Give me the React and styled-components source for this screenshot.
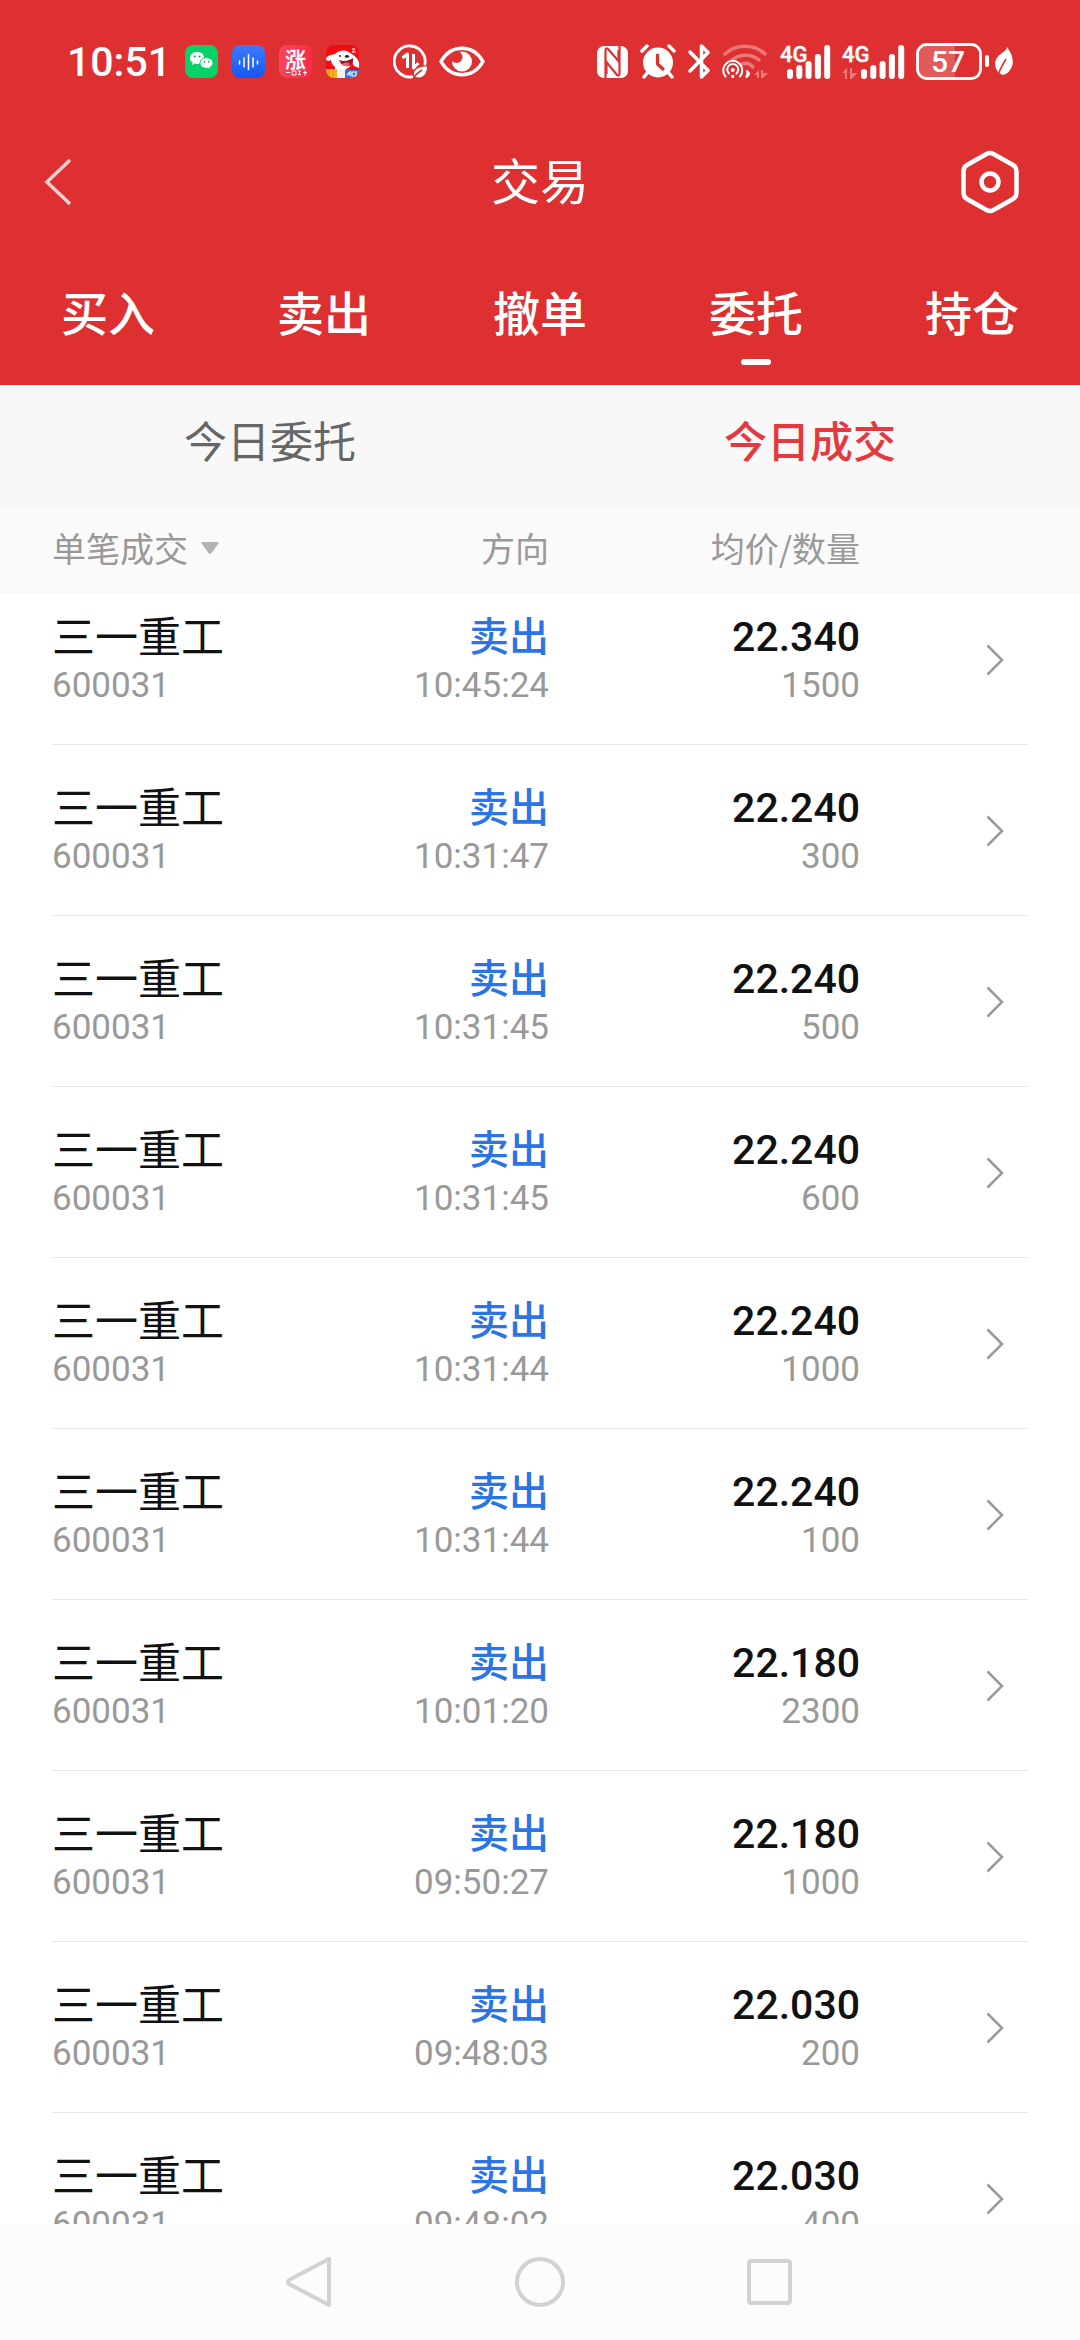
import React, { useState } from "react";
import styled, { createGlobalStyle } from "styled-components";

const GlobalStyle = createGlobalStyle`
    * {
        box-sizing: border-box;
    }
    body {
        margin: 0;
        background-color: #ffffff;
        font-family: "Noto Sans CJK SC", "Noto Sans", sans-serif;
    }
    button {
        margin: 0;
        padding: 0;
        border: none;
        background: none;
        color: inherit;
        font: inherit;
    }
    svg {
        display: block;
        flex: none;
    }
`

const digits = 'Roboto, "Noto Sans CJK SC", sans-serif'

const Screen = styled.div`
    height: 100vh;
    display: flex;
    flex-direction: column;
    overflow: hidden;
`

const Header = styled.header`
    background-color: #de3031;
    color: #ffffff;
`

const StatusBar = styled.div`
    height: 123px;
    padding: 0 67px;
    display: flex;
    align-items: center;
    justify-content: space-between;
`

const StatusGroup = styled.div`
    display: flex;
    align-items: center;
    gap: ${props => props.$gap}px;
`

const Clock = styled.span`
    font-family: ${digits};
    font-size: 41px;
    font-weight: 500;
    line-height: 50px;
`

const TitleBar = styled.div`
    height: 117px;
    padding: 0 42px;
    display: grid;
    grid-template-columns: 1fr auto 1fr;
    align-items: center;
`

const Title = styled.h1`
    margin: 0;
    padding-bottom: 6px;
    font-size: 49px;
    font-weight: 400;
    line-height: 60px;
`

const BackButton = styled.button`
    justify-self: start;
`

const SettingsButton = styled.button`
    justify-self: end;
    padding-right: 19px;
`

const Tabs = styled.nav`
    height: 145px;
    display: flex;
`

const Tab = styled.button`
    flex: 1;
    display: flex;
    flex-direction: column;
    align-items: center;
    justify-content: flex-end;
    gap: 18px;
    padding-bottom: 20px;
    font-size: 47px;
    font-weight: 500;
    line-height: 60px;

    &::after {
        content: "";
        width: 30px;
        height: 6px;
        border-radius: 3px;
        background-color: ${props => (props.$active ? "#ffffff" : "transparent")};
    }
`

const SubTabs = styled.div`
    height: 123px;
    display: flex;
    background-color: #f8f8f8;
`

const SubTab = styled.button`
    flex: 1;
    padding-bottom: 16px;
    font-size: 43px;
    font-weight: ${props => (props.$active ? 500 : 400)};
    color: ${props => (props.$active ? "#e4393f" : "#666666")};
`

const Main = styled.main`
    flex: 1;
    min-height: 0;
    overflow: hidden;
`

const Deals = styled.table`
    display: block;
    width: 100%;
`

const DealsHead = styled.thead`
    display: block;
    position: relative;
    z-index: 1;
    background-color: #fafafa;
`

// the list is scrolled a little under the head
const DealsBody = styled.tbody`
    display: block;
    margin-top: -20px;
`

const Row = styled.tr`
    margin: 0 52px;
    display: grid;
    grid-template-columns: 225fr 272fr 311fr 168fr;
`

const HeadRow = styled(Row)`
    height: 86px;
    padding-bottom: 6px;
    align-items: center;
`

const DealRow = styled(Row)`
    height: 171px;
    border-bottom: 1px solid #e9e9e9;
`

const HeadCell = styled.th`
    padding: 0;
    font-size: 34px;
    font-weight: 400;
    line-height: 50px;
    color: #999999;
    text-align: ${props => props.$align || "right"};
`

const SortButton = styled.button`
    display: flex;
    align-items: center;
    gap: 13px;
`

const Cell = styled.td`
    padding: 35px 0 0;
    text-align: ${props => props.$align || "right"};
`

const Lead = styled.div`
    height: 50px;
    line-height: 50px;
`

const StockName = styled(Lead)`
    font-size: 43px;
    color: #111111;
`

const Direction = styled(Lead)`
    font-size: 40px;
    font-weight: 500;
    color: #2b74e6;
`

const Price = styled(Lead)`
    line-height: 56px;
    font-family: ${digits};
    font-size: 41px;
    font-weight: 500;
    color: #111111;
`

const Sub = styled.div`
    line-height: 54px;
    font-family: ${digits};
    font-size: 35px;
    color: #999999;
`

const ArrowCell = styled.td`
    display: flex;
    justify-content: flex-end;
    align-items: center;
    padding: 2px 24px 0 0;
`

const NavBar = styled.footer`
    height: 116px;
    display: flex;
    align-items: center;
    justify-content: center;
    gap: 180px;
    background-color: #fcfcfc;
`

/* ---------- status bar icons ---------- */

const WechatIcon = () => (
    <svg width="33" height="33" viewBox="0 0 33 33">
        <rect width="33" height="33" rx="8" fill="#07d267" />
        <path d="M12 7c-4 0-7 2.600-7 6 0 2 1 3.500 2.600 4.600L7 20l2.800-1.400c4.600 1.200 9.400-1.600 9.400-5.600S16 7 12 7z" fill="#fff" />
        <path d="M21.500 12.700c-3.800 0-6.500 2.400-6.500 5.400s3.300 6 8 5l2.700 1.400-.6-2.300c1.900-1.100 2.900-2.500 2.900-4.100 0-3-2.900-5.400-6.500-5.400z" fill="#fff" stroke="#07d267" strokeWidth="1" />
        <circle cx="9.800" cy="11.500" r="1" fill="#07a552" />
        <circle cx="14.500" cy="11.500" r="1" fill="#07a552" />
        <circle cx="19.500" cy="16.800" r=".9" fill="#07a552" />
        <circle cx="23.600" cy="16.800" r=".9" fill="#07a552" />
    </svg>
)

const VoiceIcon = () => (
    <svg width="33" height="33" viewBox="0 0 33 33">
        <defs>
            <linearGradient id="voice" x1="0" y1="0" x2="0" y2="1">
                <stop offset="0" stopColor="#3d7bfb" />
                <stop offset="1" stopColor="#1458f5" />
            </linearGradient>
        </defs>
        <rect width="33" height="33" rx="8" fill="url(#voice)" />
        <path d="M7.500 16v3M12 13v9M16.500 9.500v15M21 13v9M25.500 16v3" stroke="#fff" strokeWidth="1.500" strokeLinecap="round" />
    </svg>
)

const StockIcon = () => (
    <svg width="33" height="33" viewBox="0 0 33 33">
        <defs>
            <linearGradient id="stock" x1="0" y1="0" x2="1" y2="0">
                <stop offset="0" stopColor="#f5465c" />
                <stop offset="1" stopColor="#fb2946" />
            </linearGradient>
        </defs>
        <rect width="33" height="33" rx="8" fill="url(#stock)" />
        <text x="16.500" y="22" textAnchor="middle" fontSize="21" fontWeight="700" fill="#fff">涨</text>
        <path d="M7 27.500h4M13 26h4v4h-4zM19 26h3M19 29.500h3M20.500 26v3.500M24 27.500h4M26 25.500v5" fill="none" stroke="#fff" strokeWidth="1" />
    </svg>
)

const DogIcon = () => (
    <svg width="33" height="33" viewBox="0 0 33 33">
        <clipPath id="dog"><rect width="33" height="33" rx="8" /></clipPath>
        <g clipPath="url(#dog)">
            <rect width="33" height="33" fill="#f20d12" />
            <path d="M0 14c1-4 5-4 9-5 4-4 11-5 15-1 4 2 8 5 9 10v5l-5-2-2-4c-1 4-3 6-6 7v3H9v-5C6 20 5 17 5 15c-2 1-4 2-5-1z" fill="#fff" />
            <path d="M13 15c5 2 9 1 14-2 1 6-3 9-7 8-3 0-6-3-7-6z" fill="#a31522" />
            <path d="M16 19c3-2 6-2 8 0-2 3-6 3-8 0z" fill="#f6626a" />
            <ellipse cx="21" cy="11.500" rx="2.200" ry="1.400" fill="#333" />
            <circle cx="14" cy="11" r="1" fill="#333" />
            <path d="M26 4h3l-3 3h4" fill="none" stroke="#fff" strokeWidth="1" />
            <path d="M0 24h11v9H0z" fill="#fbb321" />
            <path d="M3 24v9M7 24v9" stroke="#e8870d" strokeWidth="1" />
            <path d="M11 25l8-2v10h-8z" fill="#f4f1ee" />
            <path d="M19 25h14v8H19z" fill="#2f78e4" />
            <path d="M21 30l3-3v4M26 27h4v4h-4z" fill="none" stroke="#fff" strokeWidth="1.200" />
        </g>
    </svg>
)

const DataSaverIcon = () => (
    <svg width="34" height="35" viewBox="0 0 34 35" fill="none" stroke="#fff">
        <path d="M32 20A15.500 15.500 0 1 0 19 32.800" strokeWidth="2.800" strokeLinecap="round" />
        <path d="M9.500 14l5-4v14M20.500 10v14l5-5" strokeWidth="3" strokeLinejoin="round" />
        <path d="M21 32c-1-7 5-9.500 13-9.500 0 7-4 12.500-11 10.500z" fill="#fff" stroke="none" />
        <path d="M20 35c2-4 5-6.500 9-9" stroke="#de3031" strokeWidth="1.500" />
    </svg>
)

const EyeIcon = () => (
    <svg width="46" height="31" viewBox="0 0 46 31">
        <path d="M2 15.500C12-2.200 34-2.200 44 15.500 34 33.200 12 33.200 2 15.500z" fill="none" stroke="#fff" strokeWidth="3.500" strokeLinejoin="round" />
        <circle cx="23" cy="15.500" r="10" fill="#fff" />
        <circle cx="17.500" cy="11" r="6" fill="#de3031" />
    </svg>
)

const NfcIcon = () => (
    <svg width="31" height="32" viewBox="0 0 31 32">
        <rect width="31" height="32" rx="7" fill="#fff" />
        <path d="M8.500 32V5q0-4 2.500-2l10.500 12V4" fill="none" stroke="#de3031" strokeWidth="2.200" />
        <path d="M22.500 0v27q0 4-2.500 2L9.500 16v12" fill="none" stroke="#de3031" strokeWidth="2.200" />
    </svg>
)

const AlarmIcon = () => (
    <svg width="36" height="35" viewBox="0 0 36 35" fill="none" strokeLinecap="round">
        <circle cx="18" cy="18.500" r="15" fill="#fff" />
        <path d="M2 7l5-5M34 7l-5-5M8 28l-4 5M28 28l4 5" stroke="#fff" strokeWidth="3.500" />
        <path d="M17.500 11v9l5.500 5" stroke="#de3031" strokeWidth="3.200" strokeLinejoin="round" />
    </svg>
)

const BluetoothIcon = () => (
    <svg width="22" height="35" viewBox="0 0 22 35" fill="none" stroke="#fff" strokeWidth="3.500" strokeLinecap="round" strokeLinejoin="round">
        <path d="M2 8l18 18.500-6.500 6.500V2l6.500 6.500L2 27" />
    </svg>
)

const WifiIcon = () => (
    <svg width="46" height="35" viewBox="0 0 46 35" fill="none" stroke="#fff" strokeLinecap="round">
        <g opacity=".35" strokeWidth="3.500">
            <path d="M3 10c11-10.500 29-10.500 40 0" />
            <path d="M10 16c8-6.500 19-6.500 27 0" />
            <path d="M20 20c4-1.500 8-.5 11 3" />
        </g>
        <g strokeWidth="2">
            <path d="M3.500 32.500a9.500 9.500 0 1 1 14.500 0" />
            <path d="M7 29.500a5.500 5.500 0 1 1 7.500 0" />
            <circle cx="10.700" cy="26" r="2" fill="#fff" stroke="none" />
            <path d="M9 31h3.400l-.6 3H9.600z" fill="#fff" stroke="none" />
        </g>
        <path d="M24 26c4 1 6 4 1 8-2 0-2-1-1-3 .6-1.500.6-3 0-5z" fill="#fff" stroke="none" />
        <path d="M32 31l5-5v8h-2v-3zM39 26h2v3h5l-5 5h-2z" fill="#fff" stroke="none" opacity=".35" />
    </svg>
)

const SignalIcon = ({ offset = 0 }) => (
    <svg width={50 + offset} height="36" viewBox={`0 0 ${50 + offset} 36`} overflow="visible">
        <text x="0" y="18" fontSize="22" fontWeight="500" fontFamily="Roboto, sans-serif" fill="#fff" stroke="#fff" strokeWidth=".4">4G</text>
        {offset > 0 && <path d="M0 29l5-5v11H3v-6zM8 24h2v5h5l-5 6H8z" fill="#fff" opacity=".35" />}
        {[10, 14, 18, 25, 34].map((h, i) => (
            <rect key={h} x={7 + offset + i * 9.3} y={35 - h} width="6" height={h} rx="3" fill="#fff" />
        ))}
    </svg>
)

const BatteryIcon = () => (
    <svg width="73" height="37" viewBox="0 0 73 37">
        <path d="M11 1.500h28v34H11a9 9 0 0 1-9-9v-16a9 9 0 0 1 9-9z" fill="#fff" opacity=".2" />
        <rect x="1.500" y="1.500" width="63" height="34" rx="9" fill="none" stroke="#fff" strokeWidth="2.800" />
        <rect x="69" y="12" width="4" height="12" rx="2" fill="#fff" />
        <text x="32" y="29" textAnchor="middle" fontSize="30" fontWeight="500" fontFamily="Roboto, sans-serif" fill="#fff">57</text>
    </svg>
)

const LeafIcon = () => (
    <svg width="18" height="29" viewBox="0 0 18 29">
        <path d="M12 0c6 8 8 17 3 23-2 3-4 4-7 5L4 26c-6-6-5-15 3-20 3-2 5-4 5-6z" fill="#fff" />
        <path d="M3 28c2-6 5-11 8-16" fill="none" stroke="#de3031" strokeWidth="1.500" />
    </svg>
)

/* ---------- page ---------- */

const tabs = ["买入", "卖出", "撤单", "委托", "持仓"]
const subTabs = ["今日委托", "今日成交"]

const deals = [
    { time: "10:45:24", price: "22.340", amount: 1500 },
    { time: "10:31:47", price: "22.240", amount: 300 },
    { time: "10:31:45", price: "22.240", amount: 500 },
    { time: "10:31:45", price: "22.240", amount: 600 },
    { time: "10:31:44", price: "22.240", amount: 1000 },
    { time: "10:31:44", price: "22.240", amount: 100 },
    { time: "10:01:20", price: "22.180", amount: 2300 },
    { time: "09:50:27", price: "22.180", amount: 1000 },
    { time: "09:48:03", price: "22.030", amount: 200 },
    { time: "09:48:02", price: "22.030", amount: 400 },
]

function Deal({ deal }) {
    return (
        <DealRow>
            <Cell $align="left">
                <StockName>三一重工</StockName>
                <Sub>600031</Sub>
            </Cell>
            <Cell>
                <Direction>卖出</Direction>
                <Sub>{deal.time}</Sub>
            </Cell>
            <Cell>
                <Price>{deal.price}</Price>
                <Sub>{deal.amount}</Sub>
            </Cell>
            <ArrowCell>
                <button aria-label="详情">
                    <svg width="18" height="32" viewBox="0 0 18 32" fill="none" stroke="#999999" strokeWidth="2.500">
                        <path d="M1.500 1.500L16 16 1.500 30.500" />
                    </svg>
                </button>
            </ArrowCell>
        </DealRow>
    )
}

function App() {
    const [tab, setTab] = useState("委托")
    const [subTab, setSubTab] = useState("今日成交")

    return (
        <Screen>
            <GlobalStyle />
            <Header>
                <StatusBar>
                    <StatusGroup $gap={34}>
                        <StatusGroup $gap={14}>
                            <Clock>10:51</Clock>
                            <WechatIcon />
                            <VoiceIcon />
                            <StockIcon />
                            <DogIcon />
                        </StatusGroup>
                        <StatusGroup $gap={12}>
                            <DataSaverIcon />
                            <EyeIcon />
                        </StatusGroup>
                    </StatusGroup>
                    <StatusGroup $gap={6}>
                        <StatusGroup $gap={12}>
                            <NfcIcon />
                            <AlarmIcon />
                            <BluetoothIcon />
                            <WifiIcon />
                            <SignalIcon />
                            <SignalIcon offset={12} />
                            <BatteryIcon />
                        </StatusGroup>
                        <LeafIcon />
                    </StatusGroup>
                </StatusBar>
                <TitleBar>
                    <BackButton aria-label="返回">
                        <svg width="30" height="48" viewBox="0 0 30 48" fill="none" stroke="#f6cfcf" strokeWidth="3.500">
                            <path d="M28 2L5 24l23 22" />
                        </svg>
                    </BackButton>
                    <Title>交易</Title>
                    <SettingsButton aria-label="设置">
                        <svg width="58" height="64" viewBox="0 0 58 64" fill="none" stroke="#ffffff" strokeWidth="4.500">
                            <path d="M25.500 4q3.500-2 7 0l19.500 11q3.500 2 3.500 6v22q0 4-3.500 6l-19.500 11q-3.500 2-7 0l-19.500-11Q2.500 47 2.500 43V21q0-4 3.500-6z" />
                            <circle cx="29" cy="32" r="8.500" />
                        </svg>
                    </SettingsButton>
                </TitleBar>
                <Tabs>
                    {tabs.map(name => (
                        <Tab key={name} $active={name === tab} onClick={() => setTab(name)}>{name}</Tab>
                    ))}
                </Tabs>
            </Header>
            <SubTabs>
                {subTabs.map(name => (
                    <SubTab key={name} $active={name === subTab} onClick={() => setSubTab(name)}>{name}</SubTab>
                ))}
            </SubTabs>
            <Main>
                <Deals>
                    <DealsHead>
                        <HeadRow>
                            <HeadCell $align="left">
                                <SortButton>
                                    单笔成交
                                    <svg width="18" height="12" viewBox="0 0 18 12">
                                        <path d="M1.500 0h15q2 0 1 1.500l-7 9.500q-1.500 2-3 0l-7-9.500Q-.5 0 1.500 0z" fill="#b3b3b3" />
                                    </svg>
                                </SortButton>
                            </HeadCell>
                            <HeadCell>方向</HeadCell>
                            <HeadCell>均价/数量</HeadCell>
                        </HeadRow>
                    </DealsHead>
                    <DealsBody>
                        {deals.map((deal, i) => <Deal key={i} deal={deal} />)}
                    </DealsBody>
                </Deals>
            </Main>
            <NavBar>
                <button aria-label="返回上一页">
                    <svg width="50" height="52" viewBox="0 0 50 52" fill="none" stroke="#d2d2d2" strokeWidth="4" strokeLinejoin="round">
                        <path d="M44 3v46L4 28q-2.500-2 0-4z" />
                    </svg>
                </button>
                <button aria-label="主屏幕">
                    <svg width="50" height="52" viewBox="0 0 50 52" fill="none" stroke="#d2d2d2" strokeWidth="4">
                        <circle cx="25" cy="26" r="23" />
                    </svg>
                </button>
                <button aria-label="最近任务">
                    <svg width="50" height="52" viewBox="0 0 50 52" fill="none" stroke="#d2d2d2" strokeWidth="4">
                        <rect x="4" y="5" width="41" height="42" rx="2" />
                    </svg>
                </button>
            </NavBar>
        </Screen>
    )
}

export default App
